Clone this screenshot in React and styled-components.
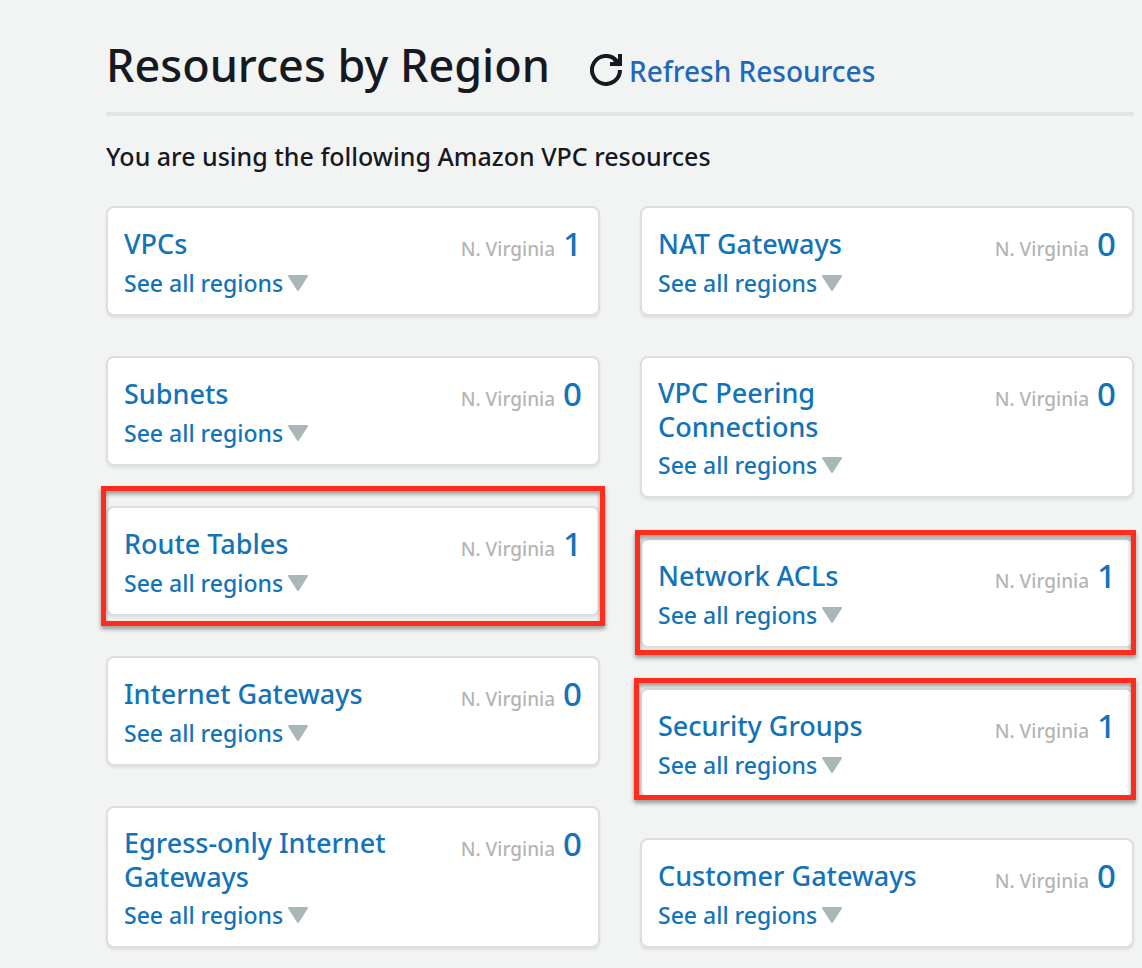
import React from "react";
import styled, { createGlobalStyle, css } from "styled-components";

const GlobalStyle = createGlobalStyle`
  *, *::before, *::after { box-sizing: border-box; }
  body {
    margin: 0;
    background: #f2f4f4;
    color: #16191f;
    font-family: "Noto Sans", "Open Sans", sans-serif;
    font-weight: 500;
  }
`;

const Page = styled.main`
  min-height: 100vh;
  padding: 39px 8px 20px 106px;
`;

const Header = styled.header`
  display: flex;
  align-items: center;
  gap: 40px;
  padding-bottom: 21px;
  border-bottom: 4px solid #e3e4e4;
`;

const Heading = styled.h1`
  margin: 0;
  font-size: 45px;
  line-height: 52px;
  font-weight: 500;
`;

const plainButton = css`
  display: inline-flex;
  align-items: center;
  padding: 0;
  border: 0;
  background: none;
  font-family: inherit;
  font-weight: inherit;
  cursor: pointer;
`;

const RefreshButton = styled.button`
  ${plainButton}
  gap: 7px;
  padding-top: 12px;
  color: #1f68ba;
  font-size: 28px;
  line-height: 40px;

  svg {
    margin-bottom: 2px;
    color: #16191f;
  }
`;

const Intro = styled.p`
  margin: 22px 0 32px;
  font-size: 25px;
  line-height: 36px;
`;

const Columns = styled.div`
  display: grid;
  grid-template-columns: 1fr 1fr;
  align-items: start;
  gap: 40px;
`;

const Column = styled.ul`
  display: flex;
  flex-direction: column;
  gap: 40px;
  margin: 0;
  padding: 0;
  list-style: none;
`;

const Card = styled.li`
  position: relative;
  padding: 18px 16px 14px;
  border: 2px solid #dddede;
  border-radius: 8px;
  background: #fff;
  box-shadow: 0 2px 3px rgba(0, 0, 0, 0.08);
`;

const CardTop = styled.div`
  display: flex;
  align-items: flex-start;
  justify-content: space-between;
  gap: 24px;
  min-height: 36px;
  margin-bottom: 4px;
`;

const Title = styled.a`
  align-self: center;
  color: #1373b9;
  font-size: 27px;
  line-height: 34px;
  text-decoration: none;
`;

const RegionCount = styled.div`
  display: flex;
  flex: none;
  align-items: baseline;
  gap: 8px;
`;

const Region = styled.span`
  color: #b3b5b4;
  font-size: 19px;
`;

const Count = styled.a`
  color: #1373b9;
  font-size: 33px;
  line-height: 36px;
  text-decoration: none;
`;

const RegionsButton = styled.button`
  ${plainButton}
  display: flex;
  gap: 5px;
  color: #1373b9;
  font-size: 23px;
  line-height: 34px;
`;

const Highlight = styled.span`
  position: absolute;
  inset: ${(p) => p.$inset};
  border: 5px solid #ff2b1d;
  filter: drop-shadow(0 3px 2px rgba(0, 0, 0, 0.4));
  pointer-events: none;
`;

const LEFT = [
  { name: "VPCs", count: 1 },
  { name: "Subnets", count: 0 },
  { name: "Route Tables", count: 1, highlight: "-22px -7px -12px" },
  { name: "Internet Gateways", count: 0 },
  { name: "Egress-only Internet Gateways", count: 0 },
];

const RIGHT = [
  { name: "NAT Gateways", count: 0 },
  { name: "VPC Peering Connections", count: 0 },
  { name: "Network ACLs", count: 1, highlight: "-10px -4px -9px -7px" },
  { name: "Security Groups", count: 1, highlight: "-12px -4px -4px -8px" },
  { name: "Customer Gateways", count: 0 },
];

function RefreshIcon() {
  return (
    <svg width="32" height="32" viewBox="0 0 32 32" fill="none" stroke="currentColor" strokeWidth="4" aria-hidden="true">
      <path d="M30 16A14 14 0 1 1 26.500 6.700L29 10" />
      <path d="M30 0V10H20" />
      <path d="M24 5L30 11" />
    </svg>
  );
}

function Caret() {
  return (
    <svg width="20" height="16" viewBox="0 0 20 16" aria-hidden="true">
      <path d="M1 1H19L10 15Z" fill="#aab7b8" stroke="#aab7b8" strokeWidth="2" strokeLinejoin="round" />
    </svg>
  );
}

function ResourceCard({ name, count, highlight }) {
  return (
    <Card>
      <CardTop>
        <Title href="#">{name}</Title>
        <RegionCount>
          <Region>N. Virginia</Region>
          <Count href="#" aria-label={`${count} ${name}`}>{count}</Count>
        </RegionCount>
      </CardTop>
      <RegionsButton type="button">
        See all regions
        <Caret />
      </RegionsButton>
      {highlight && <Highlight $inset={highlight} />}
    </Card>
  );
}

export default function App() {
  return (
    <>
      <GlobalStyle />
      <Page>
        <Header>
          <Heading>Resources by Region</Heading>
          <RefreshButton type="button">
            <RefreshIcon />
            Refresh Resources
          </RefreshButton>
        </Header>
        <Intro>You are using the following Amazon VPC resources</Intro>
        <Columns>
          {[LEFT, RIGHT].map((items, i) => (
            <Column key={i}>
              {items.map((item) => (
                <ResourceCard key={item.name} {...item} />
              ))}
            </Column>
          ))}
        </Columns>
      </Page>
    </>
  );
}
